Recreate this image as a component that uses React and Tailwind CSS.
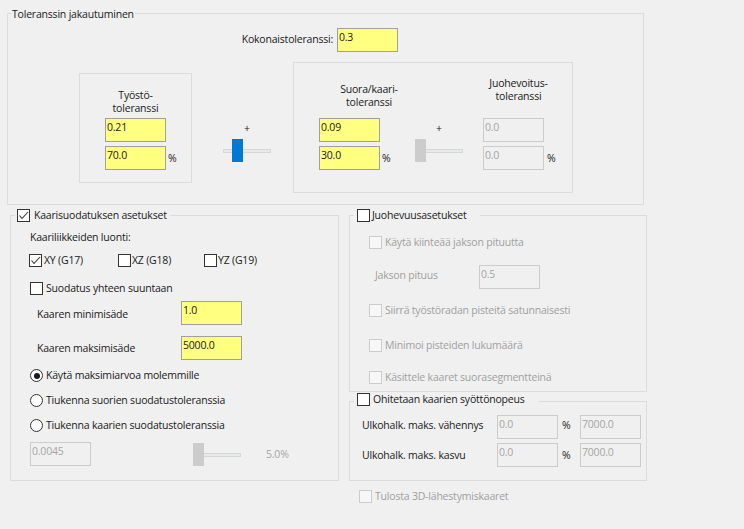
import React from 'react';

// ─── Small Windows-style controls ────────────────────────────────
const Field = ({ value, disabled }) => (
  <div
    className={`w-[61px] h-[24px] flex-none border pl-[1px] pt-[1px] leading-[15px] ${
      disabled ? 'border-[#cccccc] bg-[#f0f0f0] text-[#a6a6a6]' : 'border-[#a0a0a0] bg-[#ffff80] text-[#1a1a1a]'
    }`}
  >
    {value}
  </div>
);

const Check = ({ checked, disabled }) => (
  <span
    className={`w-[13px] h-[13px] flex-none border flex items-center justify-center ${
      disabled ? 'border-[#cccccc] bg-[#f7f7f7]' : 'border-[#333333] bg-white'
    }`}
  >
    {checked && (
      <svg width="11" height="11" viewBox="0 0 11 11">
        <path d="M1.5 5.5 L4 8.5 L10 2" fill="none" stroke="#333333" strokeWidth="1.1" />
      </svg>
    )}
  </span>
);

const Radio = ({ on }) => (
  <span className="w-[13px] h-[13px] flex-none rounded-full border border-[#333333] bg-white flex items-center justify-center">
    {on && <span className="w-[6px] h-[6px] rounded-full bg-[#1a1a1a]" />}
  </span>
);

const Slider = ({ thumb, blue }) => (
  <div className="relative w-[48px] h-[23px]">
    <div className="absolute left-0 right-0 top-[10px] h-[4px] border border-[#d6d6d6] bg-[#e7eaea]" />
    <div className={`absolute top-0 w-[11px] h-[23px] ${thumb} ${blue ? 'bg-[#0078d7]' : 'bg-[#cccccc]'}`} />
  </div>
);

// groupbox title that sits on the top border
const Legend = ({ children, className = '' }) => (
  <div className={`w-fit bg-[#f0f0f0] flex items-center ${className}`}>{children}</div>
);

export default function App() {
  return (
    <div className="w-[744px] h-[529px] overflow-hidden bg-[#f0f0f0] text-[#1a1a1a] text-[10.5px] leading-[15px] tracking-[-0.2px] font-['Open_Sans',sans-serif]">
      {/* ── Toleranssin jakautuminen ── */}
      <div className="ml-[7px] mt-[13px] w-[637px] h-[192px] border border-[#dcdcdc]">
        <Legend className="-mt-[7px] ml-[3px] px-[1px]">Toleranssin jakautuminen</Legend>

        <div className="mt-[6px] w-[390px] flex justify-end items-start">
          <span className="mt-[4px] mr-[4px]">Kokonaistoleranssi:</span>
          <Field value="0.3" />
        </div>

        <div className="mt-[10px] flex items-start">
          {/* Työstö */}
          <div className="ml-[71px] mt-[11px] w-[113px] h-[110px] border border-[#dcdcdc] flex flex-col">
            <div className="mt-[15px] text-center leading-[13px]">
              Työstö-
              <br />
              toleranssi
            </div>
            <div className="mt-[3px] ml-[25px] flex flex-col gap-[4px]">
              <Field value="0.21" />
              <div className="flex items-center">
                <Field value="70.0" />
                <span className="ml-[2px]">%</span>
              </div>
            </div>
          </div>

          <div className="ml-[31px] w-[48px] flex flex-col">
            <div className="mt-[59px] text-center">+</div>
            <div className="mt-[3px]">
              <Slider thumb="left-[9px]" blue />
            </div>
          </div>

          {/* Suora/kaari + Juohevoitus */}
          <div className="ml-[22px] w-[280px] h-[131px] border border-[#dcdcdc] flex items-start">
            <div className="ml-[25px] w-[96px] flex flex-col">
              <div className="mt-[20px] w-[100px] text-center leading-[13px]">
                Suora/kaari-
                <br />
                toleranssi
              </div>
              <div className="mt-[9px] flex flex-col gap-[4px]">
                <Field value="0.09" />
                <div className="flex items-center">
                  <Field value="30.0" />
                  <span className="ml-[2px]">%</span>
                </div>
              </div>
            </div>

            <div className="w-[48px] flex flex-col">
              <div className="mt-[58px] text-center">+</div>
              <div className="mt-[3px]">
                <Slider thumb="left-0" />
              </div>
            </div>

            <div className="ml-[20px] flex flex-col">
              <div className="mt-[14px] w-[71px] text-center leading-[13px]">
                Juohevoitus-
                <br />
                toleranssi
              </div>
              <div className="mt-[15px] flex flex-col gap-[4px]">
                <Field value="0.0" disabled />
                <div className="flex items-center">
                  <Field value="0.0" disabled />
                  <span className="ml-[3px]">%</span>
                </div>
              </div>
            </div>
          </div>
        </div>
      </div>

      <div className="mt-[10px] flex items-start">
        {/* ── Kaarisuodatuksen asetukset ── */}
        <div className="ml-[10px] w-[329px] h-[266px] border border-[#dcdcdc] flex flex-col">
          <Legend className="-mt-[8px] ml-[4px] pl-[2px] pr-[3px]">
            <Check checked />
            <span className="ml-[4px]">Kaarisuodatuksen asetukset</span>
          </Legend>

          <div className="mt-[7px] ml-[19px]">Kaariliikkeiden luonti:</div>

          <div className="mt-[8px] ml-[18px] flex items-center">
            <div className="w-[89px] flex items-center">
              <Check checked />
              <span className="ml-[2px]">XY (G17)</span>
            </div>
            <div className="w-[86px] flex items-center">
              <Check />
              <span className="ml-[1px]">XZ (G18)</span>
            </div>
            <div className="flex items-center">
              <Check />
              <span className="ml-[1px]">YZ (G19)</span>
            </div>
          </div>

          <div className="mt-[13px] ml-[19px] flex items-center">
            <Check />
            <span className="ml-[3px]">Suodatus yhteen suuntaan</span>
          </div>

          <div className="mt-[5px] flex items-start">
            <span className="ml-[26px] w-[144px] mt-[6px]">Kaaren minimisäde</span>
            <Field value="1.0" />
          </div>

          <div className="mt-[11px] flex items-start">
            <span className="ml-[26px] w-[144px] mt-[5px]">Kaaren maksimisäde</span>
            <Field value="5000.0" />
          </div>

          <div className="mt-[8px] ml-[19px] flex items-center">
            <Radio on />
            <span className="ml-[3px]">Käytä maksimiarvoa molemmille</span>
          </div>
          <div className="mt-[10px] ml-[19px] flex items-center">
            <Radio />
            <span className="ml-[3px]">Tiukenna suorien suodatustoleranssia</span>
          </div>
          <div className="mt-[10px] ml-[19px] flex items-center">
            <Radio />
            <span className="ml-[3px]">Tiukenna kaarien suodatustoleranssia</span>
          </div>

          <div className="mt-[9px] ml-[19px] flex items-center">
            <Field value="0.0045" disabled />
            <div className="ml-[102px]">
              <Slider thumb="left-0" />
            </div>
            <span className="ml-[25px] text-[#a6a6a6]">5.0%</span>
          </div>
        </div>

        {/* ── right column ── */}
        <div className="ml-[10px] w-[298px] flex flex-col">
          <div className="h-[177px] border border-[#dcdcdc] flex flex-col text-[#a0a0a0]">
            <Legend className="-mt-[8px] ml-[4px] pl-[3px] pr-[13px] text-[#1a1a1a]">
              <Check />
              <span className="ml-[2px]">Juohevuusasetukset</span>
            </Legend>

            <div className="mt-[12px] ml-[19px] flex items-center">
              <Check disabled />
              <span className="ml-[3px]">Käytä kiinteää jakson pituutta</span>
            </div>

            <div className="mt-[15px] flex items-start">
              <span className="ml-[25px] w-[104px] mt-[3px]">Jakson pituus</span>
              <Field value="0.5" disabled />
            </div>

            <div className="mt-[14px] ml-[19px] flex items-center">
              <Check disabled />
              <span className="ml-[3px]">Siirrä työstöradan pisteitä satunnaisesti</span>
            </div>
            <div className="mt-[20px] ml-[19px] flex items-center">
              <Check disabled />
              <span className="ml-[3px]">Minimoi pisteiden lukumäärä</span>
            </div>
            <div className="mt-[17px] ml-[19px] flex items-center">
              <Check disabled />
              <span className="ml-[3px]">Käsittele kaaret suorasegmentteinä</span>
            </div>
          </div>

          <div className="mt-[9px] h-[80px] border border-[#dcdcdc] flex flex-col">
            <Legend className="-mt-[10px] ml-[4px] pl-[3px] pr-[14px]">
              <Check />
              <span className="ml-[3px]">Ohitetaan kaarien syöttönopeus</span>
            </Legend>

            <div className="mt-[8px] flex items-start">
              <span className="ml-[12px] w-[135px] mt-[3px]">Ulkohalk. maks. vähennys</span>
              <Field value="0.0" disabled />
              <span className="w-[22px] pl-[4px] mt-[3px]">%</span>
              <Field value="7000.0" disabled />
            </div>
            <div className="mt-[4px] flex items-start">
              <span className="ml-[12px] w-[135px] mt-[5px]">Ulkohalk. maks. kasvu</span>
              <Field value="0.0" disabled />
              <span className="w-[22px] pl-[4px] mt-[5px]">%</span>
              <Field value="7000.0" disabled />
            </div>
          </div>

          <div className="mt-[8px] ml-[10px] flex items-center text-[#a0a0a0]">
            <Check disabled />
            <span className="ml-[3px]">Tulosta 3D-lähestymiskaaret</span>
          </div>
        </div>
      </div>
    </div>
  );
}
